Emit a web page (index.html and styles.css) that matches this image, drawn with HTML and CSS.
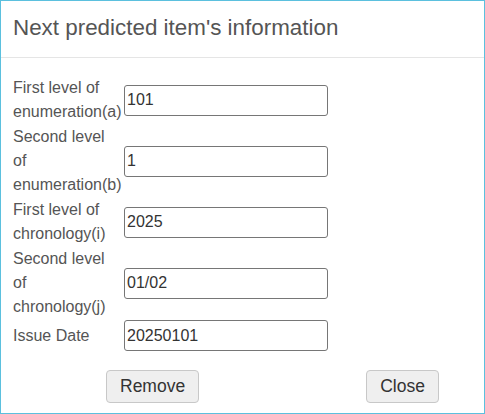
FILE: index.html
```html
<!DOCTYPE html>
<html lang="en">
<head>
<meta charset="utf-8">
<title>Next predicted item's information</title>
<link rel="stylesheet" href="styles.css">
</head>
<body>
<div class="modal">
  <div class="modal-header">
    <h4 class="modal-title">Next predicted item's information</h4>
  </div>
  <div class="modal-body">
    <div class="form-grid">
      <label class="lbl" for="f1">First level of enumeration(a)</label>
      <input class="field" id="f1" type="text" value="101">
      <label class="lbl" for="f2">Second level of enumeration(b)</label>
      <input class="field" id="f2" type="text" value="1">
      <label class="lbl" for="f3">First level of chronology(i)</label>
      <input class="field" id="f3" type="text" value="2025">
      <label class="lbl" for="f4">Second level of chronology(j)</label>
      <input class="field" id="f4" type="text" value="01/02">
      <label class="lbl" for="f5">Issue Date</label>
      <input class="field" id="f5" type="text" value="20250101">
    </div>
    <div class="actions">
      <button class="btn" type="button">Remove</button>
      <button class="btn" type="button">Close</button>
    </div>
  </div>
</div>
</body>
</html>
```
FILE: styles.css
```css
html, body {
  margin: 0;
  padding: 0;
  background: #ffffff;
}
* {
  box-sizing: border-box;
}
.modal {
  width: 485px;
  height: 414px;
  border: 1px solid #5bc0de;
  font-family: "Liberation Sans", Arial, sans-serif;
  color: #555555;
  overflow: hidden;
}
.modal-header {
  height: 57px;
  border-bottom: 1px solid #e5e5e5;
  padding: 14px 12px 0 12px;
}
.modal-title {
  margin: 0;
  font-size: 22.4px;
  font-weight: normal;
  line-height: 26px;
  color: #555555;
}
.modal-body {
  padding: 18px 12px 0 12px;
}
.form-grid {
  display: grid;
  grid-template-columns: 108px 204px;
  column-gap: 3px;
  row-gap: 1px;
  align-items: center;
}
.lbl {
  font-size: 16px;
  line-height: 24px;
  color: #555555;
  white-space: normal;
}
.field {
  height: 31px;
  width: 204px;
  margin: 0;
  border: 1px solid #767676;
  border-radius: 3px;
  padding: 0 2px;
  font-family: "Liberation Sans", Arial, sans-serif;
  font-size: 16px;
  color: #333333;
  background: #ffffff;
}
.actions {
  display: flex;
  gap: 167px;
  padding-left: 93px;
  margin-top: 19px;
}
.btn {
  margin: 0;
  height: 33px;
  padding: 0 13px;
  border: 1px solid #c8c8c8;
  border-radius: 4px;
  background: #efefef;
  color: #333333;
  font-family: "Liberation Sans", Arial, sans-serif;
  font-size: 17.5px;
}
```
